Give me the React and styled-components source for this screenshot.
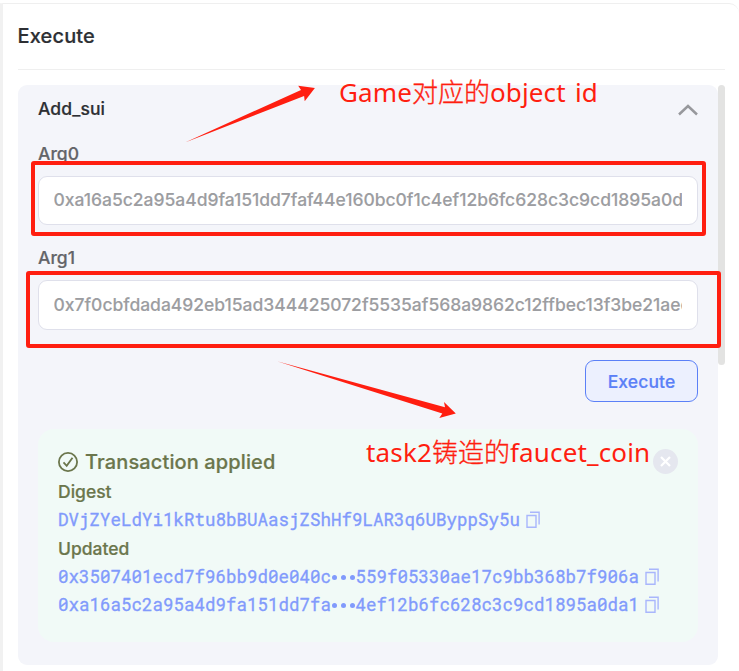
import React from "react";
import styled, { createGlobalStyle } from "styled-components";

const Global = createGlobalStyle`
  * { box-sizing: border-box; }
  body { margin: 0; background: #fff; font-family: Inter, "Liberation Sans", sans-serif; }
`;

const Panel = styled.main`
  position: relative;
  width: 739px;
  height: 671px;
  overflow: hidden;
  padding-top: 3px;
  background: #fff;
`;

const Frame = styled.section`
  height: 668px;
  padding-left: 15px;
  border-top: 1px solid #efefef;
  border-left: 3px solid #f1f1f1;
  border-top-right-radius: 10px;
`;

const Header = styled.header`
  display: flex;
  align-items: center;
  width: 707px;
  height: 66px;
  padding-bottom: 2px;
  border-bottom: 1px solid #efefef;
`;

const Title = styled.h1`
  margin: 0 0 0 -0.5px;
  font-size: 20px;
  line-height: 24px;
  font-weight: 500;
  letter-spacing: 0.15px;
  color: #2d2f33;
  -webkit-text-stroke: 0.2px currentColor;
`;

const ScrollArea = styled.div`
  display: flex;
  align-items: flex-start;
  margin-top: 15px;
`;

const ScrollThumb = styled.div`
  width: 7px;
  height: 280px;
  border-radius: 4px;
  background: #e3e3e2;
`;

const Card = styled.article`
  display: flex;
  flex-direction: column;
  width: 700px;
  height: 580px;
  padding: 12px 20px 0;
  border-radius: 9px;
  background: #f4f5fa;
`;

const CardHead = styled.div`
  display: flex;
  justify-content: space-between;
  height: 45px;
  font-size: 17.5px;
  line-height: 24px;
  font-weight: 500;
  letter-spacing: 0.08px;
  color: #2d2f33;
  -webkit-text-stroke: 0.2px currentColor;
`;

const Chevron = styled.svg`
  width: 20px;
  height: 12px;
  margin-top: 7px;
`;

const Field = styled.label`
  display: flex;
  flex-direction: column;
  height: ${(p) => p.$height};
`;

const FieldLabel = styled.span`
  height: 34px;
  font-size: 17.5px;
  line-height: 24px;
  font-weight: 500;
  color: #636468;
  -webkit-text-stroke: 0.2px currentColor;
`;

const FieldBox = styled.span`
  display: flex;
  align-items: center;
  height: ${(p) => p.$height};
  padding: 0 15px ${(p) => p.$lift || "0"} 14.5px;
  border: 1px solid #dfe0eb;
  border-radius: 9px;
  background: #fff;
`;

const FieldValue = styled.span`
  flex: 1;
  overflow: hidden;
  white-space: nowrap;
  font-size: 17.5px;
  line-height: 24px;
  font-weight: 500;
  letter-spacing: -0.02px;
  color: #9c9da1;
  -webkit-text-stroke: 0.1px currentColor;
`;

const ExecuteButton = styled.button`
  align-self: flex-end;
  width: 113px;
  height: 42px;
  padding: 2px 0 0;
  border: 1px solid #5b80f7;
  border-radius: 9px;
  background: #ecf0fe;
  font: 500 17.5px/24px Inter, sans-serif;
  letter-spacing: 0.1px;
  color: #5b80f7;
  -webkit-text-stroke: 0.2px currentColor;
`;

const Result = styled.section`
  height: 213px;
  margin-top: 27px;
  padding: 20px 20px 0;
  border-radius: 16px;
  background: #f1faf7;
  color: #6b764c;
`;

const ResultHead = styled.div`
  display: flex;
  align-items: center;
  height: 25px;
  font-size: 20px;
  line-height: 24px;
  font-weight: 500;
  letter-spacing: 0.12px;
  -webkit-text-stroke: 0.2px currentColor;
`;

const CheckIcon = styled.svg`
  width: 20px;
  height: 20px;
  margin-right: 7px;
`;

const CloseIcon = styled.svg`
  width: 25px;
  height: 25px;
  margin-left: auto;
`;

const ResultLabel = styled.div`
  height: 29px;
  padding-top: 6px;
  font-size: 17.5px;
  line-height: 24px;
  font-weight: 500;
  -webkit-text-stroke: 0.2px currentColor;
`;

const HashRow = styled.div`
  display: flex;
  align-items: center;
  height: 28px;
  padding-top: 6px;
  white-space: pre;
  font-family: "Roboto Mono", "Liberation Mono", monospace;
  font-size: 17.5px;
  line-height: 22px;
  color: #819afc;
  -webkit-text-stroke: 0.35px currentColor;
`;

const Dots = styled.span`
  display: inline-flex;
  align-items: center;
  gap: 4px;
  width: 24.5px;
  padding-left: 0.5px;
`;

const Dot = styled.i`
  width: 5px;
  height: 5px;
  border-radius: 50%;
  background: #819afc;
`;

const CopyIcon = styled.svg`
  width: 14px;
  height: 17px;
  margin: 0 0 1px 5.5px;
`;

const Outline = styled.div`
  position: absolute;
  left: ${(p) => p.$x}px;
  top: ${(p) => p.$y}px;
  width: ${(p) => p.$w}px;
  height: ${(p) => p.$h}px;
  border: 4px solid #ff1e10;
  border-radius: 3px;
`;

const Arrows = styled.svg`
  position: absolute;
  left: 0;
  top: 0;
  pointer-events: none;
`;

const Note = styled.div`
  position: absolute;
  left: ${(p) => p.$x}px;
  top: ${(p) => p.$y}px;
  white-space: nowrap;
  font-family: "Noto Sans", "Noto Sans CJK SC", sans-serif;
  font-size: 26px;
  line-height: 36px;
  letter-spacing: ${(p) => p.$spacing};
  word-spacing: 2.5px;
  color: #ff1e10;
`;

const Han = styled.span`
  font-family: "Noto Sans CJK SC", sans-serif;
  font-weight: 300;
  letter-spacing: 0;
  -webkit-text-stroke: 0.35px currentColor;
`;

function Copy() {
  return (
    <CopyIcon viewBox="0 0 14 17" fill="none" stroke="#a9b6fc" strokeWidth="1.4">
      <path d="M1 4.5h9v11.7H1zM4 1.2h9.1v12.3" />
    </CopyIcon>
  );
}

function Hash({ start, end }) {
  return (
    <HashRow>
      <span>{start}</span>
      {end && <Dots><Dot /><Dot /><Dot /></Dots>}
      {end && <span>{end}</span>}
      <Copy />
    </HashRow>
  );
}

export default function App() {
  return (
    <Panel>
      <Global />
      <Frame>
        <Header><Title>Execute</Title></Header>
        <ScrollArea>
          <Card>
            <CardHead>
              Add_sui
              <Chevron viewBox="0 0 20 12" fill="none" stroke="#97989c" strokeWidth="2.5">
                <path d="M1 10.5 10 2l9 8.5" />
              </Chevron>
            </CardHead>
            <Field $height="104px">
              <FieldLabel>Arg0</FieldLabel>
              <FieldBox $height="49px" $lift="2px">
                <FieldValue>0xa16a5c2a95a4d9fa151dd7faf44e160bc0f1c4ef12b6fc628c3c9cd1895a0d</FieldValue>
              </FieldBox>
            </Field>
            <Field $height="114px">
              <FieldLabel>Arg1</FieldLabel>
              <FieldBox $height="50px">
                <FieldValue>0x7f0cbfdada492eb15ad344425072f5535af568a9862c12ffbec13f3be21aec</FieldValue>
              </FieldBox>
            </Field>
            <ExecuteButton>Execute</ExecuteButton>
            <Result>
              <ResultHead>
                <CheckIcon viewBox="0 0 20 20" fill="none" stroke="#6b764c" strokeWidth="1.8">
                  <circle cx="10" cy="10" r="9.1" />
                  <path d="m5.5 10.3 3.2 3.5 5.8-8" />
                </CheckIcon>
                Transaction applied
                <CloseIcon viewBox="0 0 25 25">
                  <circle cx="12.5" cy="12.5" r="12.5" fill="#e5e7ef" />
                  <path d="m8 8 9 9M17 8l-9 9" stroke="#fff" strokeWidth="2.2" />
                </CloseIcon>
              </ResultHead>
              <ResultLabel>Digest</ResultLabel>
              <Hash start="DVjZYeLdYi1kRtu8bBUAasjZShHf9LAR3q6UByppSy5u" />
              <ResultLabel>Updated</ResultLabel>
              <Hash start="0x3507401ecd7f96bb9d0e040c" end="559f05330ae17c9bb368b7f906a" />
              <Hash start="0xa16a5c2a95a4d9fa151dd7fa" end="4ef12b6fc628c3c9cd1895a0da1" />
            </Result>
          </Card>
          <ScrollThumb />
        </ScrollArea>
      </Frame>
      <Outline $x={31} $y={161} $w={675} $h={75} />
      <Outline $x={26} $y={271} $w={695} $h={77} />
      <Arrows width="739" height="671" fill="#ff1e10">
        <path d="M185 142.5 301 90l-2.8-4.2 16.7 2.2-10.2 13.2-.6-5.2Z" />
        <path d="M277 361.3 445 407.3l-1-5.3 11.8 11.4-16.5 4.6 3-4.6Z" />
      </Arrows>
      <Note $x={339} $y={73} $spacing="0.12px">Game<Han>对应的</Han>object id</Note>
      <Note $x={366} $y={433} $spacing="0.15px">task2<Han>铸造的</Han>faucet_coin</Note>
    </Panel>
  );
}
